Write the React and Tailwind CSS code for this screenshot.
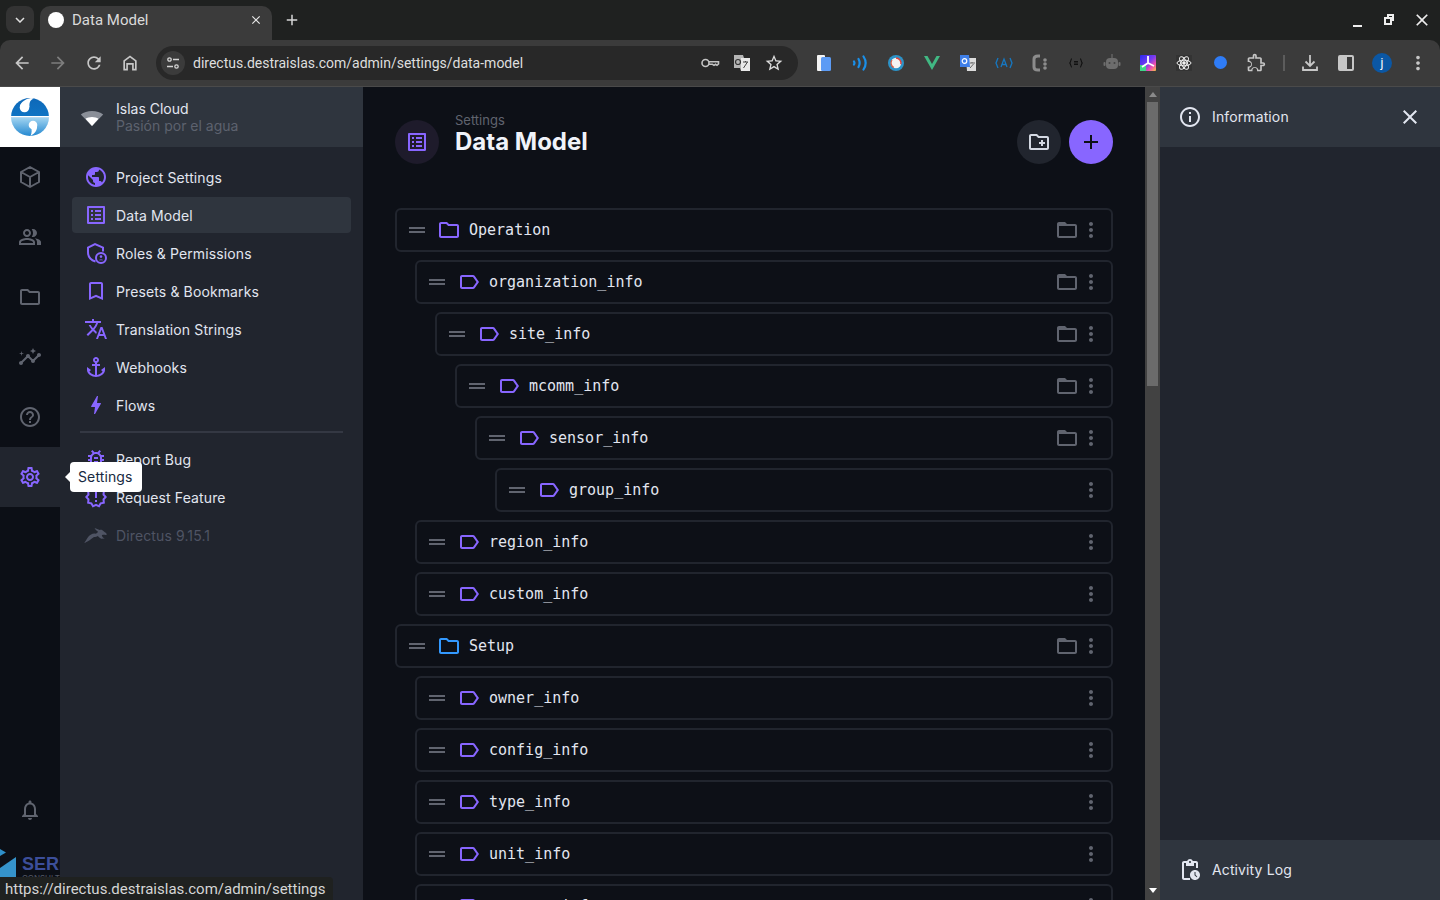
import React from "react";

// material icon paths
const P = {
  globe: "M12 2C6.48 2 2 6.48 2 12s4.48 10 10 10 10-4.48 10-10S17.52 2 12 2zm-1 17.93c-3.95-.49-7-3.85-7-7.93 0-.62.08-1.21.21-1.79L9 15v1c0 1.1.9 2 2 2v1.93zm6.9-2.54c-.26-.81-1-1.39-1.9-1.39h-1v-3c0-.55-.45-1-1-1H8v-2h2c.55 0 1-.45 1-1V7h2c1.1 0 2-.9 2-2v-.41c2.93 1.19 5 4.06 5 7.41 0 2.08-.8 3.97-2.1 5.39z",
  listAlt: "M19 5v14H5V5h14m1.1-2H3.9c-.5 0-.9.4-.9.9v16.2c0 .4.4.9.9.9h16.2c.4 0 .9-.5.9-.9V3.9c0-.5-.5-.9-.9-.9zM11 7h6v2h-6V7zm0 4h6v2h-6v-2zm0 4h6v2h-6zM7 7h2v2H7zm0 4h2v2H7zm0 4h2v2H7z",
  bookmark: "M17 3H7c-1.1 0-1.99.9-1.99 2L5 21l7-3 7 3V5c0-1.1-.9-2-2-2zm0 15l-5-2.18L7 18V5h10v13z",
  translate: "M12.87 15.07l-2.54-2.51.03-.03c1.74-1.94 2.98-4.17 3.71-6.53H17V4h-7V2H8v2H1v1.99h11.17C11.5 7.92 10.44 9.75 9 11.35 8.07 10.32 7.3 9.19 6.69 8h-2c.73 1.63 1.73 3.17 2.98 4.56l-5.09 5.02L4 19l5-5 3.11 3.11.76-2.04zM18.5 10h-2L12 22h2l1.12-3h4.75L21 22h2l-4.5-12zm-2.62 7l1.62-4.33L19.12 17h-3.24z",
  anchor: "M17,15l1.55,1.55c-0.96,1.69-3.33,3.04-5.55,3.37V11h3V9h-3V7.82C14.16,7.4,15,6.3,15,5c0-1.65-1.35-3-3-3S9,3.35,9,5 c0,1.3,0.84,2.4,2,2.82V9H8v2h3v8.92c-2.22-0.33-4.59-1.68-5.55-3.37L7,15l-4-3v3c0,3.88,4.92,7,9,7s9-3.12,9-7v-3L17,15z M12,4 c0.55,0,1,0.45,1,1s-0.45,1-1,1s-1-0.45-1-1S11.45,4,12,4z",
  bolt: "M11 21h-1l1-7H7.5c-.58 0-.57-.32-.38-.66.19-.34.05-.08.07-.12C8.48 10.94 10.42 7.54 13 3h1l-1 7h3.5c.49 0 .56.33.47.51l-.07.15C12.96 17.55 11 21 11 21z",
  bug: "M20 8h-2.81c-.45-.78-1.07-1.45-1.82-1.96L17 4.41 15.59 3l-2.17 2.17C12.96 5.06 12.49 5 12 5s-.96.06-1.41.17L8.41 3 7 4.41l1.62 1.63C7.88 6.55 7.26 7.22 6.81 8H4v2h2.09c-.05.33-.09.66-.09 1v1H4v2h2v1c0 .34.04.67.09 1H4v2h2.81c1.04 1.79 2.97 3 5.19 3s4.15-1.21 5.19-3H20v-2h-2.09c.05-.33.09-.66.09-1v-1h2v-2h-2v-1c0-.34-.04-.67-.09-1H20V8zm-4 4v3c0 .22-.03.47-.07.7l-.1.65-.37.65c-.72 1.24-2.04 2-3.46 2s-2.74-.77-3.46-2l-.37-.64-.1-.65C8.03 15.48 8 15.23 8 15v-4c0-.23.03-.48.07-.7l.1-.65.37-.65c.3-.52.72-.97 1.21-1.31l.57-.39.74-.18c.31-.08.63-.12.94-.12.32 0 .63.04.95.12l.68.16.61.42c.5.34.91.78 1.21 1.31l.38.65.1.65c.04.22.07.47.07.69v1zm-6 2h4v2h-4zm0-4h4v2h-4z",
  feature: "M23 12l-2.44-2.78.34-3.68-3.61-.82-1.89-3.18L12 3 8.6 1.54 6.71 4.72l-3.61.81.34 3.68L1 12l2.44 2.78-.34 3.69 3.61.82 1.89 3.18L12 21l3.4 1.46 1.89-3.18 3.61-.82-.34-3.68L23 12zm-4.51 2.11l.26 2.79-2.74.62-1.43 2.41L12 18.82l-2.58 1.11-1.43-2.41-2.74-.62.26-2.8L3.66 12l1.85-2.12-.26-2.78 2.74-.61 1.43-2.41L12 5.18l2.58-1.11 1.43 2.41 2.74.62-.26 2.79L20.34 12l-1.85 2.11zM11 15h2v2h-2zm0-8h2v6h-2z",
  settings: "M19.43 12.98c.04-.32.07-.64.07-.98 0-.34-.03-.66-.07-.98l2.11-1.65c.19-.15.24-.42.12-.64l-2-3.46c-.09-.16-.26-.25-.44-.25-.06 0-.12.01-.17.03l-2.49 1c-.52-.4-1.08-.73-1.69-.98l-.38-2.65C14.46 2.18 14.25 2 14 2h-4c-.25 0-.46.18-.49.42l-.38 2.65c-.61.25-1.17.59-1.69.98l-2.49-1c-.06-.02-.12-.03-.18-.03-.17 0-.34.09-.43.25l-2 3.46c-.13.22-.07.49.12.64l2.11 1.65c-.04.32-.07.65-.07.98 0 .33.03.66.07.98l-2.11 1.65c-.19.15-.24.42-.12.64l2 3.46c.09.16.26.25.44.25.06 0 .12-.01.17-.03l2.49-1c.52.4 1.08.73 1.69.98l.38 2.65c.03.24.24.42.49.42h4c.25 0 .46-.18.49-.42l.38-2.65c.61-.25 1.17-.59 1.69-.98l2.49 1c.06.02.12.03.18.03.17 0 .34-.09.43-.25l2-3.46c.12-.22.07-.49-.12-.64l-2.11-1.65zm-1.98-1.71c.04.31.05.52.05.73 0 .21-.02.43-.05.73l-.14 1.13.89.7 1.08.84-.7 1.21-1.27-.51-1.04-.42-.9.68c-.43.32-.84.56-1.25.73l-1.06.43-.16 1.13-.2 1.35h-1.4l-.19-1.35-.16-1.13-1.06-.43c-.43-.18-.83-.41-1.23-.71l-.91-.7-1.06.43-1.27.51-.7-1.21 1.08-.84.89-.7-.14-1.13c-.03-.31-.05-.54-.05-.74s.02-.43.05-.73l.14-1.13-.89-.7-1.08-.84.7-1.21 1.27.51 1.04.42.9-.68c.43-.32.84-.56 1.25-.73l1.06-.43.16-1.13.2-1.35h1.39l.19 1.35.16 1.13 1.06.43c.43.18.83.41 1.23.71l.91.7 1.06-.43 1.27-.51.7 1.21-1.07.85-.89.7.14 1.13zM12 8c-2.21 0-4 1.79-4 4s1.79 4 4 4 4-1.79 4-4-1.79-4-4-4zm0 6c-1.1 0-2-.9-2-2s.9-2 2-2 2 .9 2 2-.9 2-2 2z",
  people: "M16.67 13.13C18.04 14.06 19 15.32 19 17v3h4v-3c0-2.18-3.57-3.47-6.33-3.87zM15 12c2.21 0 4-1.79 4-4s-1.79-4-4-4c-.47 0-.91.1-1.33.24C14.5 5.27 15 6.58 15 8s-.5 2.73-1.33 3.76c.42.14.86.24 1.33.24zM9 12c2.21 0 4-1.79 4-4s-1.79-4-4-4-4 1.79-4 4 1.79 4 4 4zm0-6c1.1 0 2 .9 2 2s-.9 2-2 2-2-.9-2-2 .9-2 2-2zM9 13c-2.67 0-8 1.34-8 4v3h16v-3c0-2.66-5.33-4-8-4zm6 5H3v-.99C3.2 16.29 6.3 15 9 15s5.8 1.29 6 2v1z",
  folder: "M9.17 6l2 2H20v10H4V6h5.17M10 4H4c-1.1 0-1.99.9-1.99 2L2 18c0 1.1.9 2 2 2h16c1.1 0 2-.9 2-2V8c0-1.1-.9-2-2-2h-8l-2-2z",
  folderTab: "M20 6h-8l-2-2H4c-1.1 0-1.99.9-1.99 2L2 18c0 1.1.9 2 2 2h16c1.1 0 2-.9 2-2V8c0-1.1-.9-2-2-2zm0 12H4V8h16v10z",
  insights: "M21 8c-1.45 0-2.26 1.44-1.93 2.51l-3.55 3.56c-.3-.09-.74-.09-1.04 0l-2.55-2.55C12.27 10.45 11.46 9 10 9c-1.45 0-2.27 1.44-1.93 2.52l-4.56 4.55C2.44 15.74 1 16.55 1 18c0 1.1.9 2 2 2 1.45 0 2.26-1.44 1.93-2.51l4.55-4.56c.3.09.74.09 1.04 0l2.55 2.55C12.73 16.55 13.54 18 15 18c1.45 0 2.27-1.44 1.93-2.52l3.56-3.55c1.07.33 2.51-.48 2.51-1.93 0-1.1-.9-2-2-2zM15 9l.94-2.07L18 6l-2.06-.93L15 3l-.92 2.07L12 6l2.08.93zM3.5 11L4 9l2-.5L4 8l-.5-2L3 8l-2 .5L3 9z",
  help: "M11 18h2v-2h-2v2zm1-16C6.48 2 2 6.48 2 12s4.48 10 10 10 10-4.48 10-10S17.52 2 12 2zm0 18c-4.41 0-8-3.59-8-8s3.59-8 8-8 8 3.59 8 8-3.59 8-8 8zm0-14c-2.21 0-4 1.79-4 4h2c0-1.1.9-2 2-2s2 .9 2 2c0 2-3 1.75-3 5h2c0-2.25 3-2.5 3-5 0-2.21-1.79-4-4-4z",
  bell: "M12 22c1.1 0 2-.9 2-2h-4c0 1.1.9 2 2 2zm6-6v-5c0-3.07-1.63-5.64-4.5-6.32V4c0-.83-.67-1.5-1.5-1.5s-1.5.67-1.5 1.5v.68C7.64 5.36 6 7.92 6 11v5l-2 2v1h16v-1l-2-2zm-2 1H8v-6c0-2.48 1.51-4.5 4-4.5s4 2.02 4 4.5v6z",
  label: "M17.63 5.84C17.27 5.33 16.67 5 16 5L5 5.01C3.9 5.01 3 5.9 3 7v10c0 1.1.9 1.99 2 1.99L16 19c.67 0 1.27-.33 1.63-.84L22 12l-4.37-6.16zM16 17H5V7h11l3.55 5L16 17z",
  drag: "M20 9H4v2h16V9zM4 15h16v-2H4v2z",
  more: "M12 8c1.1 0 2-.9 2-2s-.9-2-2-2-2 .9-2 2 .9 2 2 2zm0 2c-1.1 0-2 .9-2 2s.9 2 2 2 2-.9 2-2-.9-2-2-2zm0 6c-1.1 0-2 .9-2 2s.9 2 2 2 2-.9 2-2-.9-2-2-2z",
  newFolder: "M20 6h-8l-2-2H4c-1.11 0-1.99.89-1.99 2L2 18c0 1.11.89 2 2 2h16c1.11 0 2-.89 2-2V8c0-1.11-.89-2-2-2zm0 12H4V6h5.17l2 2H20v10zm-8-4h2v2h2v-2h2v-2h-2v-2h-2v2h-2z",
  info: "M11 7h2v2h-2zm0 4h2v6h-2zm1-9C6.48 2 2 6.48 2 12s4.48 10 10 10 10-4.48 10-10S17.52 2 12 2zm0 18c-4.41 0-8-3.59-8-8s3.59-8 8-8 8 3.59 8 8-3.59 8-8 8z",
  close: "M19 6.41L17.59 5 12 10.59 6.41 5 5 6.41 10.59 12 5 17.59 6.41 19 12 13.41 17.59 19 19 17.59 13.41 12z",
  add: "M19 13h-6v6h-2v-6H5v-2h6V5h2v6h6v2z",
  activity: "M17 12c-2.76 0-5 2.24-5 5s2.24 5 5 5 5-2.24 5-5-2.24-5-5-5zm1.65 7.35L16.5 17.2V14h1v2.79l1.85 1.85-.7.71zM18 3h-3.18C14.4 1.84 13.3 1 12 1s-2.4.84-2.82 2H6c-1.1 0-2 .9-2 2v15c0 1.1.9 2 2 2h6v-2H6V5h2v3h8V5h2v5h2V5c0-1.1-.9-2-2-2zm-6 2c-.55 0-1-.45-1-1s.45-1 1-1 1 .45 1 1-.45 1-1 1z",
  back: "M20 11H7.83l5.59-5.59L12 4l-8 8 8 8 1.41-1.41L7.83 13H20v-2z",
  forward: "M12 4l-1.41 1.41L16.17 11H4v2h12.17l-5.58 5.59L12 20l8-8z",
  reload: "M17.65 6.35C16.2 4.9 14.21 4 12 4c-4.42 0-7.99 3.58-7.99 8s3.57 8 7.99 8c3.73 0 6.84-2.55 7.73-6h-2.08c-.82 2.33-3.04 4-5.65 4-3.31 0-6-2.69-6-6s2.69-6 6-6c1.66 0 3.14.69 4.22 1.78L13 11h7V4l-2.35 2.35z",
  home: "M12 3L4 9v12h5.5v-7h5v7H20V9l-8-6zm6 16h-1.5v-7h-9v7H6v-9l6-4.5 6 4.5v9z",
  star: "M22 9.24l-7.19-.62L12 2 9.19 8.63 2 9.24l5.46 4.73L5.82 21 12 17.27 18.18 21l-1.63-7.03L22 9.24zM12 15.4l-3.76 2.27 1-4.28-3.32-2.88 4.38-.38L12 6.1l1.71 4.04 4.38.38-3.32 2.88 1 4.28L12 15.4z",
  puzzle: "M20.5 11H19V7c0-1.1-.9-2-2-2h-4V3.5C13 2.12 11.88 1 10.5 1S8 2.12 8 3.5V5H4c-1.1 0-2 .9-2 2v3.8h1.5c1.5 0 2.7 1.2 2.7 2.7s-1.2 2.7-2.7 2.7H2V20c0 1.1.9 2 2 2h3.8v-1.5c0-1.5 1.2-2.7 2.7-2.7s2.7 1.2 2.7 2.7V22H17c1.1 0 2-.9 2-2v-4h1.5c1.4 0 2.5-1.1 2.5-2.5S21.9 11 20.5 11zm0 3H17v6h-2.2c-.7-2-2.2-3.2-4.3-3.2s-3.600 1.200-4.300 3.200H4v-2.200c2-.7 3.200-2.200 3.200-4.300S6 9.900 4 9.200V7h6V3.500c0-.3.200-.5.500-.5s.5.200.5.500V7h6v6h3.500c.3 0 .5.200.5.500s-.2.500-.5.500z",
};

function Ic({ d, size = 24, className = "" }) {
  return (
    <svg width={size} height={size} viewBox="0 0 24 24" fill="currentColor" className={`shrink-0 ${className}`}>
      <path d={d} fillRule="evenodd" />
    </svg>
  );
}

function BoxIcon() {
  return (
    <svg width="24" height="24" viewBox="0 0 24 24" fill="none" stroke="currentColor" strokeWidth="2" strokeLinejoin="round" className="shrink-0">
      <path d="M12 2l9 5v10l-9 5-9-5V7zM3 7l9 5 9-5M12 12v10" />
    </svg>
  );
}

function RolesIcon() {
  return (
    <svg width="24" height="24" viewBox="0 0 24 24" fill="none" className="shrink-0 text-[#8866ff]">
      <path d="M19 10.500V6.600L11 3 4 6.600v4.600c0 4.400 3 8 7.500 9.300" stroke="currentColor" strokeWidth="2" />
      <circle cx="17" cy="17" r="5" stroke="currentColor" strokeWidth="2" />
      <circle cx="17" cy="15.600" r="1.300" fill="currentColor" />
      <path d="M14.600 19.200c.5-1 4.300-1 4.800 0z" fill="currentColor" />
    </svg>
  );
}

function Rabbit() {
  return (
    <svg width="24" height="24" viewBox="0 0 24 24" className="shrink-0 text-[#4f5464]" fill="currentColor">
      <path d="M0 20c1.500-1.500 2.500-3.600 3.600-5.200C5.200 12.300 8.600 10.200 11 10.600c1.400.2 2.400-.6 3-1.800-1-.8-2.800-2.200-3.400-3.800 1.800.4 3.600 1.300 5 2.100.8-.4 1.900-.4 2.800.2.8.6 2.200 1.800 3.600 2.800l1 1.400-1.600.4c-1.400-.2-2.600-.2-3.600.4.2 1.400 1.400 2.600 3 3.200l-3.600.2c-1.400-.6-2.600-1.600-3.400-2.600-1 .6-2.400 1-3.800 1C7.200 16 4.400 18.600 0 20z" />
    </svg>
  );
}

function Logo() {
  return (
    <svg width="38" height="38" viewBox="0 0 38 38">
      <defs>
        <linearGradient id="lg" x1="0" y1="0" x2="0" y2="1">
          <stop offset="0" stopColor="#0e68b8" />
          <stop offset="0.48" stopColor="#0f74c4" />
          <stop offset="0.53" stopColor="#9ed2f0" />
          <stop offset="1" stopColor="#2488d0" />
        </linearGradient>
      </defs>
      <circle cx="19" cy="19" r="19" fill="url(#lg)" />
      <rect x="0" y="18" width="38" height="1.500" fill="#fff" />
      <circle cx="13.500" cy="9.500" r="4.800" fill="#fff" />
      <path d="M9 8c1-4 5-7 11-8 1 0 2 .2 3 .6-3 1-5 3-4.500 8.400z" fill="#fff" />
      <circle cx="22" cy="27" r="4.300" fill="#fff" />
      <path d="M26 27.500c.5 4-1.500 7.500-6.500 10.500 1.500-3.500 1.500-6 .5-9z" fill="#fff" />
    </svg>
  );
}

const modules = [P.people, P.folder, P.insights, P.help];

const navItems = [
  { icon: P.globe, label: "Project Settings" },
  { icon: P.listAlt, label: "Data Model", active: true },
  { roles: true, label: "Roles & Permissions" },
  { icon: P.bookmark, label: "Presets & Bookmarks" },
  { icon: P.translate, label: "Translation Strings" },
  { icon: P.anchor, label: "Webhooks" },
  { icon: P.bolt, label: "Flows" },
];

const rows = [
  { name: "Operation", depth: 0, group: true, blue: false, sub: true },
  { name: "organization_info", depth: 1, sub: true },
  { name: "site_info", depth: 2, sub: true },
  { name: "mcomm_info", depth: 3, sub: true },
  { name: "sensor_info", depth: 4, sub: true },
  { name: "group_info", depth: 5 },
  { name: "region_info", depth: 1 },
  { name: "custom_info", depth: 1 },
  { name: "Setup", depth: 0, group: true, blue: true, sub: true },
  { name: "owner_info", depth: 1 },
  { name: "config_info", depth: 1 },
  { name: "type_info", depth: 1 },
  { name: "unit_info", depth: 1 },
  { name: "measure_info", depth: 1 },
];

const depthClass = ["ml-0", "ml-[20px]", "ml-[40px]", "ml-[60px]", "ml-[80px]", "ml-[100px]"];

function NavRow({ item }) {
  return (
    <div className={`flex h-[36px] items-center gap-[8px] rounded-[4px] px-[12px] ${item.active ? "bg-[#2f353e]" : ""}`}>
      {item.roles ? <RolesIcon /> : <Ic d={item.icon} className="text-[#8866ff]" />}
      <span className="text-[14px] tracking-[0.12px] text-[#e2e6f0]">{item.label}</span>
    </div>
  );
}

function CollectionRow({ row }) {
  return (
    <div className={`flex h-[44px] shrink-0 items-center rounded-[6px] border-2 border-[#21252e] px-[8px] ${depthClass[row.depth]}`}>
      <Ic d={P.drag} className="text-[#60646f]" />
      <Ic d={row.group ? P.folder : P.label} className={`ml-[8px] ${row.blue ? "text-[#3399ff]" : "text-[#8866ff]"}`} />
      <span className="ml-[8px] text-[15px] text-[#e2e6f0] [font-family:'DejaVu_Sans_Mono',monospace]">{row.name}</span>
      <div className="ml-auto flex items-center">
        {row.sub && <Ic d={P.folderTab} className="text-[#60646f]" />}
        <Ic d={P.more} className="text-[#60646f]" />
      </div>
    </div>
  );
}

function Ext({ children }) {
  return <div className="flex h-[36px] w-[36px] shrink-0 items-center justify-center">{children}</div>;
}

function Toolbar() {
  return (
    <div className="flex h-[47px] shrink-0 items-center rounded-t-[10px] border-b border-[#4a4a4a] bg-[#3b3b3b] pb-[1px] pl-[4px] text-[#c7c7c7]">
      <Ext><Ic d={P.back} size={20} /></Ext>
      <Ext><Ic d={P.forward} size={20} className="text-[#7e7e7e]" /></Ext>
      <Ext><Ic d={P.reload} size={20} /></Ext>
      <Ext><Ic d={P.home} size={20} /></Ext>
      <div className="ml-[8px] flex h-[34px] w-[642px] shrink-0 items-center rounded-full bg-[#282828] pl-[5px] pr-[14px]">
        <div className="flex h-[24px] w-[24px] items-center justify-center rounded-full bg-[#3b3b3b]">
          <svg width="14" height="14" viewBox="0 0 14 14" fill="none" stroke="#d5d5d5" strokeWidth="1.300">
            <circle cx="3.500" cy="3.500" r="1.700" />
            <path d="M7 3.500h6M1 10.500h6" />
            <circle cx="10.500" cy="10.500" r="1.700" />
          </svg>
        </div>
        <span className="ml-[8px] mt-[1px] text-[14px] text-[#dedede] [font-family:Roboto,sans-serif]">directus.destraislas.com/admin/settings/data-model</span>
        <div className="ml-auto flex items-center gap-[12px]">
          <svg width="20" height="20" viewBox="0 0 20 20" fill="none" stroke="#c4c4c4" strokeWidth="1.600">
            <circle cx="5.500" cy="10" r="3.500" />
            <path d="M9 8.800h9.500V11l-1.500 1.300-1.500-1-1.500 1-1.500-1H9" />
          </svg>
          <svg width="20" height="20" viewBox="0 0 20 20">
            <path d="M2 2h9l1 3h6v13H9l-1-3H2z" fill="#b5b5b5" />
            <path d="M9 5h9v13H9z" fill="#e8e8e8" />
            <circle cx="6" cy="9" r="2.500" fill="none" stroke="#333" strokeWidth="1.200" />
            <path d="M11 9h5M13.500 8v1M11.500 15l4-6" stroke="#444" strokeWidth="1" fill="none" />
          </svg>
          <Ic d={P.star} size={20} className="text-[#dcdcdc]" />
        </div>
      </div>
      <div className="ml-[8px] flex items-center">
        <Ext>
          <svg width="16" height="18" viewBox="0 0 16 18">
            <rect x="1" y="1" width="8" height="16" rx="1" fill="#f4f4f4" />
            <rect x="5" y="3" width="10" height="14" rx="1.500" fill="#5c9bf5" />
          </svg>
        </Ext>
        <Ext>
          <svg width="16" height="16" viewBox="0 0 16 16" fill="none" stroke="#1a8fe8" strokeWidth="2.200" strokeLinecap="round">
            <path d="M2 6.500c.6 1 .6 2 0 3M6.500 4c1.500 2.600 1.500 5.400 0 8M11.500 1.500c2.800 4.200 2.800 8.800 0 13" />
          </svg>
        </Ext>
        <Ext>
          <svg width="16" height="16" viewBox="0 0 16 16" fill="none">
            <circle cx="8" cy="8" r="8" fill="#2c93c8" />
            <circle cx="8" cy="8" r="5.200" fill="#f3f3f3" />
            <path d="M8 3a5 5 0 0 1 4.800 6.300" stroke="#e0403a" strokeWidth="1.400" />
            <path d="M6 12.500A5 5 0 0 1 4 5" stroke="#d9583f" strokeWidth="1.200" />
          </svg>
        </Ext>
        <Ext>
          <svg width="16" height="14" viewBox="0 0 16 14">
            <path d="M0 0h3.500L8 8l4.500-8H16L8 14z" fill="#41b883" />
          </svg>
        </Ext>
        <Ext>
          <svg width="18" height="18" viewBox="0 0 18 18">
            <path d="M7 4h10v13H8z" fill="#dcdcdc" />
            <path d="M1 1h9l1 12H1z" fill="#3f7fe8" />
            <circle cx="5.500" cy="7" r="2.300" fill="none" stroke="#fff" strokeWidth="1.200" />
            <path d="M11 9h5M13 8v1M11 14l3.500-4" stroke="#666" strokeWidth="1" fill="none" />
          </svg>
        </Ext>
        <Ext>
          <svg width="18" height="14" viewBox="0 0 18 14" fill="none" stroke="#1678c2" strokeWidth="1.300">
            <path d="M3 2L1 7l2 5M15 2l2 5-2 5M6 11l3-8 3 8M7 8.500h4" />
          </svg>
        </Ext>
        <Ext>
          <svg width="16" height="18" viewBox="0 0 16 18" fill="none" stroke="#8c8c8c" strokeWidth="3">
            <path d="M8 2H6C3.500 2 2 3 2 5v8c0 2 1.500 3 4 3h2" />
            <circle cx="13" cy="6" r="1.800" fill="#8c8c8c" stroke="none" />
            <circle cx="13" cy="10" r="1.800" fill="#8c8c8c" stroke="none" />
            <circle cx="13" cy="14" r="1.800" fill="#8c8c8c" stroke="none" />
          </svg>
        </Ext>
        <Ext>
          <svg width="14" height="10" viewBox="0 0 14 10" fill="none" stroke="#111" strokeWidth="1.100">
            <path d="M3 .8C1.500 .8 2 4 .8 5 2 6 1.500 9.200 3 9.200M11 .8c1.500 0 1 3.200 2.200 4.200-1.200 1-.7 4.200-2.200 4.200M5 3.500h4M5 5h4M5 6.500h4" />
          </svg>
        </Ext>
        <Ext>
          <svg width="18" height="18" viewBox="0 0 18 18" fill="#6d6d6d">
            <rect x="8.400" y="0" width="1.200" height="4" />
            <rect x="3" y="4" width="12" height="11" rx="4" />
            <rect x="0.500" y="8" width="2" height="4" rx="1" />
            <rect x="15.500" y="8" width="2" height="4" rx="1" />
            <circle cx="6.500" cy="9" r="1" fill="#444" />
            <circle cx="11.500" cy="9" r="1" fill="#444" />
          </svg>
        </Ext>
        <Ext>
          <svg width="16" height="16" viewBox="0 0 16 16">
            <defs>
              <linearGradient id="pr" x1="0" y1="0" x2="1" y2="1">
                <stop offset="0" stopColor="#2a2af0" />
                <stop offset="0.5" stopColor="#7a3cf0" />
                <stop offset="0.75" stopColor="#f04fb0" />
                <stop offset="1" stopColor="#f5c542" />
              </linearGradient>
            </defs>
            <rect width="16" height="16" rx="1" fill="url(#pr)" />
            <rect y="10" width="6" height="6" fill="#3fd68a" />
            <path d="M8 1v7L2 12M8 8l6 3" stroke="#fff" strokeWidth="1.800" fill="none" />
          </svg>
        </Ext>
        <Ext>
          <svg width="16" height="16" viewBox="0 0 16 16" fill="none" stroke="#f0f0f0" strokeWidth="1">
            <rect width="16" height="16" fill="#333" stroke="none" />
            <ellipse cx="8" cy="8" rx="7" ry="2.800" />
            <ellipse cx="8" cy="8" rx="7" ry="2.800" transform="rotate(60 8 8)" />
            <ellipse cx="8" cy="8" rx="7" ry="2.800" transform="rotate(120 8 8)" />
            <circle cx="8" cy="8" r="1.300" fill="#f0f0f0" />
          </svg>
        </Ext>
        <Ext>
          <div className="h-[13px] w-[13px] rounded-full bg-[#2f7cf6]" />
        </Ext>
        <Ext><Ic d={P.puzzle} size={20} /></Ext>
        <div className="ml-[9px] h-[16px] w-[2px] bg-[#5c5c5c]" />
        <div className="ml-[7px] flex items-center">
          <Ext>
            <svg width="20" height="20" viewBox="0 0 20 20" fill="none" stroke="#c7c7c7" strokeWidth="1.800">
              <path d="M10 2v11M5.500 8.500l4.500 4.500 4.500-4.500M3 13.500V17h14v-3.500" />
            </svg>
          </Ext>
          <Ext>
            <div className="flex h-[16px] w-[16px] overflow-hidden rounded-[2px] border-2 border-[#c7c7c7]">
              <div className="w-[7px] bg-[#c7c7c7]" />
            </div>
          </Ext>
          <Ext>
            <div className="flex h-[20px] w-[20px] items-center justify-center rounded-full bg-[#0b57a4] text-[12px] text-white [font-family:Roboto,sans-serif]">j</div>
          </Ext>
          <Ext><Ic d={P.more} size={22} /></Ext>
        </div>
      </div>
    </div>
  );
}

export default function App() {
  return (
    <div className="relative flex h-screen w-full flex-col overflow-hidden bg-[#1f2120] [font-family:Inter,sans-serif]">
      {/* tab strip */}
      <div className="flex h-[40px] shrink-0 items-end pl-[6px] text-[#d6d6d6]">
        <div className="mb-[7px] flex h-[27px] w-[28px] items-center justify-center rounded-[8px] bg-[#333333]">
          <svg width="10" height="6" viewBox="0 0 10 6" fill="none" stroke="#e0e0e0" strokeWidth="1.500"><path d="M1 1l4 4 4-4" /></svg>
        </div>
        <div className="ml-[6px] flex h-[34px] w-[232px] items-center rounded-t-[10px] bg-[#3b3b3b] pb-[6px] pl-[8px] pr-[9px]">
          <div className="h-[16px] w-[16px] rounded-full bg-white" />
          <span className="ml-[8px] text-[15px] text-[#dadada] [font-family:Roboto,sans-serif]">Data Model</span>
          <Ic d={P.close} size={14} className="ml-auto text-[#e8e8e8]" />
        </div>
        <div className="mb-[6px] ml-[10px] flex h-[28px] w-[20px] items-center justify-center">
          <Ic d={P.add} size={18} />
        </div>
        <div className="mb-[6px] ml-auto flex h-[28px] items-center gap-[12px] pr-[9px] text-[#eeeeee]">
          <div className="flex h-[20px] w-[20px] items-end justify-center pb-[3px]"><div className="h-[2px] w-[9px] bg-[#eeeeee]" /></div>
          <div className="relative h-[20px] w-[20px]">
            <div className="absolute left-[8px] top-[4px] h-[7px] w-[7px] border-2 border-[#eeeeee]" />
            <div className="absolute left-[5px] top-[7px] h-[8px] w-[8px] border-2 border-[#eeeeee] bg-[#1f2120]" />
          </div>
          <Ic d={P.close} size={20} className="translate-x-[1px]" />
        </div>
      </div>

      <Toolbar />

      {/* directus app */}
      <div className="flex min-h-0 flex-1">
        {/* module bar */}
        <div className="flex w-[60px] shrink-0 flex-col overflow-hidden bg-[#0c0f16] text-[#60646f]">
          <div className="flex h-[60px] shrink-0 items-center justify-center bg-white"><Logo /></div>
          <div className="flex h-[60px] shrink-0 items-center justify-center"><BoxIcon /></div>
          {modules.map((d) => (
            <div key={d} className="flex h-[60px] shrink-0 items-center justify-center"><Ic d={d} /></div>
          ))}
          <div className="flex h-[60px] shrink-0 items-center justify-center bg-[#21252e] text-[#8866ff]"><Ic d={P.settings} /></div>
          <div className="mt-[291px] flex h-[24px] shrink-0 items-center justify-center"><Ic d={P.bell} /></div>
          <div className="mt-[27px] flex items-start">
            <svg width="18" height="30" viewBox="0 0 18 30" className="shrink-0">
              <path d="M0 0l6 3.500-6 3.500z" fill="#2f8fc9" />
              <path d="M16 8v22H0V19z" fill="#3593cb" />
            </svg>
            <div className="ml-[4px] flex flex-col pt-[5px]">
              <span className="whitespace-nowrap text-[18px] font-bold leading-[20px] text-[#3c4e9a] [font-family:'Liberation_Sans',sans-serif]">SERI</span>
              <span className="whitespace-nowrap text-[8px] leading-[9px] text-[#555a66]">CONSULTING</span>
            </div>
          </div>
        </div>

        {/* sidebar */}
        <div className="flex w-[303px] shrink-0 flex-col bg-[#21252e]">
          <div className="flex h-[60px] shrink-0 items-center bg-[#2f353e] pl-[20px]">
            <svg width="24" height="24" viewBox="0 0 24 24" className="shrink-0">
              <path d="M.8 9.500C3.500 7.300 7.500 6 12 6s8.500 1.300 11.200 3.500L12 21z" fill="#8a8f98" />
              <path d="M5.500 13.800c1.700-1.100 4-1.800 6.500-1.800s4.800.7 6.500 1.800L12 21z" fill="#ffffff" />
            </svg>
            <div className="ml-[12px] flex flex-col">
              <span className="text-[14px] leading-[17px] text-[#e2e6f0]">Islas Cloud</span>
              <span className="text-[14px] leading-[17px] text-[#5d626e]">Pasión por el agua</span>
            </div>
          </div>
          <div className="flex flex-col gap-[2px] px-[12px] pt-[12px]">
            {navItems.map((item) => <NavRow key={item.label} item={item} />)}
          </div>
          <div className="mx-[20px] mb-[8px] mt-[8px] h-[2px] bg-[#343843]" />
          <div className="flex flex-col gap-[2px] px-[12px]">
            <NavRow item={{ icon: P.bug, label: "Report Bug" }} />
            <NavRow item={{ icon: P.feature, label: "Request Feature" }} />
            <div className="flex h-[36px] items-center gap-[8px] px-[12px]">
              <Rabbit />
              <span className="text-[14px] tracking-[0.12px] text-[#4f5464]">Directus 9.15.1</span>
            </div>
          </div>
        </div>

        {/* main */}
        <div className="flex min-w-0 flex-1 flex-col overflow-hidden bg-[#0d1017] px-[32px] pt-[33px]">
          <div className="flex h-[44px] shrink-0 items-center">
            <div className="flex h-[44px] w-[44px] items-center justify-center rounded-full bg-[#1e1b2b] text-[#8866ff]"><Ic d={P.listAlt} /></div>
            <div className="mb-[10px] ml-[16px] flex flex-col">
              <span className="-mt-[6px] text-[13px] leading-[16px] text-[#60646f]">Settings</span>
              <span className="text-[24px] font-bold leading-[28px] text-[#f0f3fa]">Data Model</span>
            </div>
            <div className="ml-auto flex items-center gap-[8px]">
              <div className="flex h-[44px] w-[44px] items-center justify-center rounded-full bg-[#21252e] text-[#d3d8e2]"><Ic d={P.newFolder} /></div>
              <div className="flex h-[44px] w-[44px] items-center justify-center rounded-full bg-[#8866ff] text-[#0d1017]"><Ic d={P.add} /></div>
            </div>
          </div>
          <div className="mt-[44px] flex flex-col gap-[8px]">
            {rows.map((r) => <CollectionRow key={r.name} row={r} />)}
          </div>
        </div>

        {/* scrollbar */}
        <div className="flex w-[15px] shrink-0 flex-col items-center bg-[#424242]">
          <div className="flex h-[15px] items-center justify-center">
            <div className="h-0 w-0 border-x-[4px] border-b-[5px] border-x-transparent border-b-[#8a8a8a]" />
          </div>
          <div className="h-[284px] w-[11px] bg-[#6b6b6b]" />
          <div className="mb-[2px] mt-auto flex h-[15px] items-center justify-center">
            <div className="h-0 w-0 border-x-[4px] border-t-[5px] border-x-transparent border-t-white" />
          </div>
        </div>

        {/* info sidebar */}
        <div className="flex w-[280px] shrink-0 flex-col bg-[#21252e]">
          <div className="flex h-[60px] shrink-0 items-center bg-[#2f353e] px-[18px] text-[#e2e6f0]">
            <Ic d={P.info} />
            <span className="mb-[2px] ml-[10px] text-[14px] tracking-[0.12px]">Information</span>
            <Ic d={P.close} className="ml-auto" />
          </div>
          <div className="mt-auto flex h-[60px] shrink-0 items-center bg-[#2f353e] pl-[18px] text-[#e2e6f0]">
            <Ic d={P.activity} />
            <span className="mb-[2px] ml-[10px] text-[14px] tracking-[0.12px]">Activity Log</span>
          </div>
        </div>
      </div>

      {/* tooltip over sidebar */}
      <div className="absolute left-[70px] top-[462px] flex h-[30px] items-center rounded-[4px] bg-white pb-[2px] pl-[8px] pr-[9px] text-[14px] tracking-[0.12px] text-[#172940]">
        Settings
        <div className="absolute -left-[5px] top-[10px] h-0 w-0 border-y-[5px] border-r-[5px] border-y-transparent border-r-white" />
      </div>

      {/* link status bubble */}
      <div className="absolute bottom-0 left-0 flex h-[23px] w-[333px] items-center rounded-tr-[4px] bg-[#1f2120] pl-[5px] pt-[1px] text-[15px] text-[#d5d5d5] [font-family:Roboto,sans-serif]">
        https://directus.destraislas.com/admin/settings
      </div>
    </div>
  );
}
